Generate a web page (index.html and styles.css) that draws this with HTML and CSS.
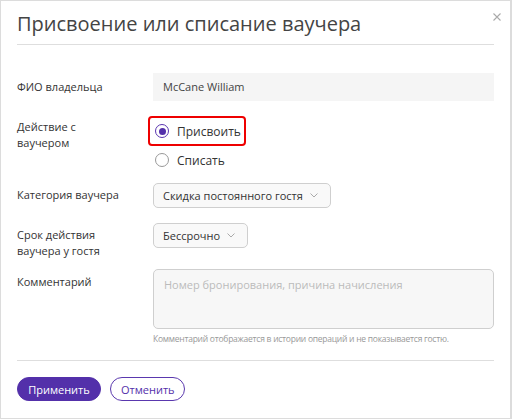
FILE: index.html
```html
<!DOCTYPE html>
<html lang="ru">
<head>
<meta charset="UTF-8">
<meta name="viewport" content="width=device-width, initial-scale=1.0">
<title>Присвоение или списание ваучера</title>
<link rel="stylesheet" href="styles.css">
</head>
<body>

<div class="dialog">
  <div class="dialog-header">
    <h2>Присвоение или списание ваучера</h2>
    <span class="close">
      <svg width="8" height="8" viewBox="0 0 8 8"><path d="M0.5 0.5 L7.5 7.5 M7.5 0.5 L0.5 7.5" stroke="#aaa" stroke-width="1.1" fill="none"/></svg>
    </span>
  </div>

  <form class="voucher-form">
    <div class="row">
      <label class="row-label label-input">ФИО владельца</label>
      <div class="field">
        <div class="text-input">McCane William</div>
      </div>
    </div>

    <div class="row row-radio">
      <label class="row-label label-radio">Действие с<br>ваучером</label>
      <div class="field">
        <div class="radio-group">
          <label class="option highlight"><span class="radio checked"></span>Присвоить</label>
          <label class="option"><span class="radio"></span>Списать</label>
        </div>
      </div>
    </div>

    <div class="row">
      <label class="row-label label-select">Категория ваучера</label>
      <div class="field">
        <div class="select">Скидка постоянного гостя
          <svg class="chevron" width="8" height="5" viewBox="0 0 8 5"><path d="M0.5 0.5 L4 4 L7.5 0.5" stroke="#aaa" stroke-width="1" fill="none"/></svg>
        </div>
      </div>
    </div>

    <div class="row row-term">
      <label class="row-label label-select">Срок действия<br>ваучера у гостя</label>
      <div class="field">
        <div class="select">Бессрочно
          <svg class="chevron" width="8" height="5" viewBox="0 0 8 5"><path d="M0.5 0.5 L4 4 L7.5 0.5" stroke="#aaa" stroke-width="1" fill="none"/></svg>
        </div>
      </div>
    </div>

    <div class="row">
      <label class="row-label label-area">Комментарий</label>
      <div class="field">
        <textarea placeholder="Номер бронирования, причина начисления"></textarea>
        <div class="hint">Комментарий отображается в истории операций и не показывается гостю.</div>
      </div>
    </div>
  </form>

  <div class="dialog-footer">
    <button class="btn btn-primary">Применить</button>
    <button class="btn btn-outline">Отменить</button>
  </div>
</div>

</body>
</html>
```

FILE: styles.css
```css
html, body {
  margin: 0;
  padding: 0;
}
body {
  font-family: "Open Sans", "Liberation Sans", sans-serif;
  color: #333;
  background: #fff;
}

.dialog {
  box-sizing: border-box;
  width: 512px;
  height: 419px;
  border: 1px solid #dcdcdc;
  border-right-width: 2px;
  padding: 0 16px;
}

.dialog-header {
  position: relative;
  height: 43px;
  border-bottom: 1px solid #dedede;
}
.dialog-header h2 {
  margin: 0;
  padding-top: 9px;
  font-size: 20px;
  line-height: 28px;
  font-weight: 400;
  color: #444;
}
.close {
  position: absolute;
  right: -7px;
  top: 12px;
  line-height: 0;
}

.voucher-form {
  margin-top: 28px;
}
.row {
  display: flex;
  align-items: flex-start;
  margin-bottom: 15px;
}
.row-radio {
  margin-bottom: 8px;
}
.row-term {
  margin-bottom: 10px;
}
.row-label {
  width: 136px;
  flex: none;
  font-size: 11px;
  line-height: 16px;
  color: #333;
}
.label-input { padding-top: 6px; }
.label-radio { padding-top: 3px; }
.label-select { padding-top: 4px; }
.label-area { padding-top: 5px; }
.field {
  flex: 1;
}

.text-input {
  height: 28px;
  line-height: 28px;
  padding: 0 10px;
  background: #f5f5f5;
  font-size: 11px;
  color: #444;
}

.radio-group {
  display: flex;
  flex-direction: column;
  margin-left: -5px;
}
.option {
  display: flex;
  align-items: center;
  gap: 8px;
  align-self: flex-start;
  height: 26px;
  padding: 0 3px 0 5px;
  border: 2px solid transparent;
  border-radius: 4px;
  font-size: 12px;
  color: #333;
}
.option + .option {
  margin-top: -1px;
}
.option.highlight {
  border-color: #ee0000;
}
.radio {
  box-sizing: border-box;
  width: 14px;
  height: 14px;
  border: 1px solid #999;
  border-radius: 50%;
  display: flex;
  align-items: center;
  justify-content: center;
}
.radio.checked {
  border: 1.5px solid #5a35b0;
}
.radio.checked::after {
  content: "";
  width: 7px;
  height: 7px;
  border-radius: 50%;
  background: #5330aa;
}

.select {
  display: inline-flex;
  align-items: center;
  box-sizing: border-box;
  height: 25px;
  padding: 0 12px 0 9px;
  border: 1px solid #cfcfcf;
  border-radius: 5px;
  background: #f9f9f9;
  font-size: 11px;
  color: #333;
}
.chevron {
  margin-left: 7px;
}

textarea {
  display: block;
  box-sizing: border-box;
  width: 100%;
  height: 60px;
  padding: 6px 10px;
  border: 1px solid #cfcfcf;
  border-radius: 5px;
  background: #f7f7f7;
  resize: none;
  font-family: "Open Sans", "Liberation Sans", sans-serif;
  font-size: 11px;
  line-height: 18px;
}
textarea::placeholder {
  color: #bbb;
}
.hint {
  margin-top: 4px;
  font-size: 8.5px;
  line-height: 12px;
  letter-spacing: -0.25px;
  color: #999;
}

.dialog-footer {
  display: flex;
  gap: 9px;
  margin-top: 0;
  padding-top: 16px;
  border-top: 1px solid #dedede;
}
.btn {
  box-sizing: border-box;
  height: 24px;
  padding: 0 10px;
  border-radius: 12px;
  font-family: "Open Sans", "Liberation Sans", sans-serif;
  font-size: 11px;
  cursor: pointer;
}
.btn-primary {
  width: 84px;
  background: #5330aa;
  border: 1px solid #5330aa;
  color: #fff;
}
.btn-outline {
  width: 75px;
  background: #fff;
  border: 1px solid #5a38ae;
  color: #5330aa;
}
```
